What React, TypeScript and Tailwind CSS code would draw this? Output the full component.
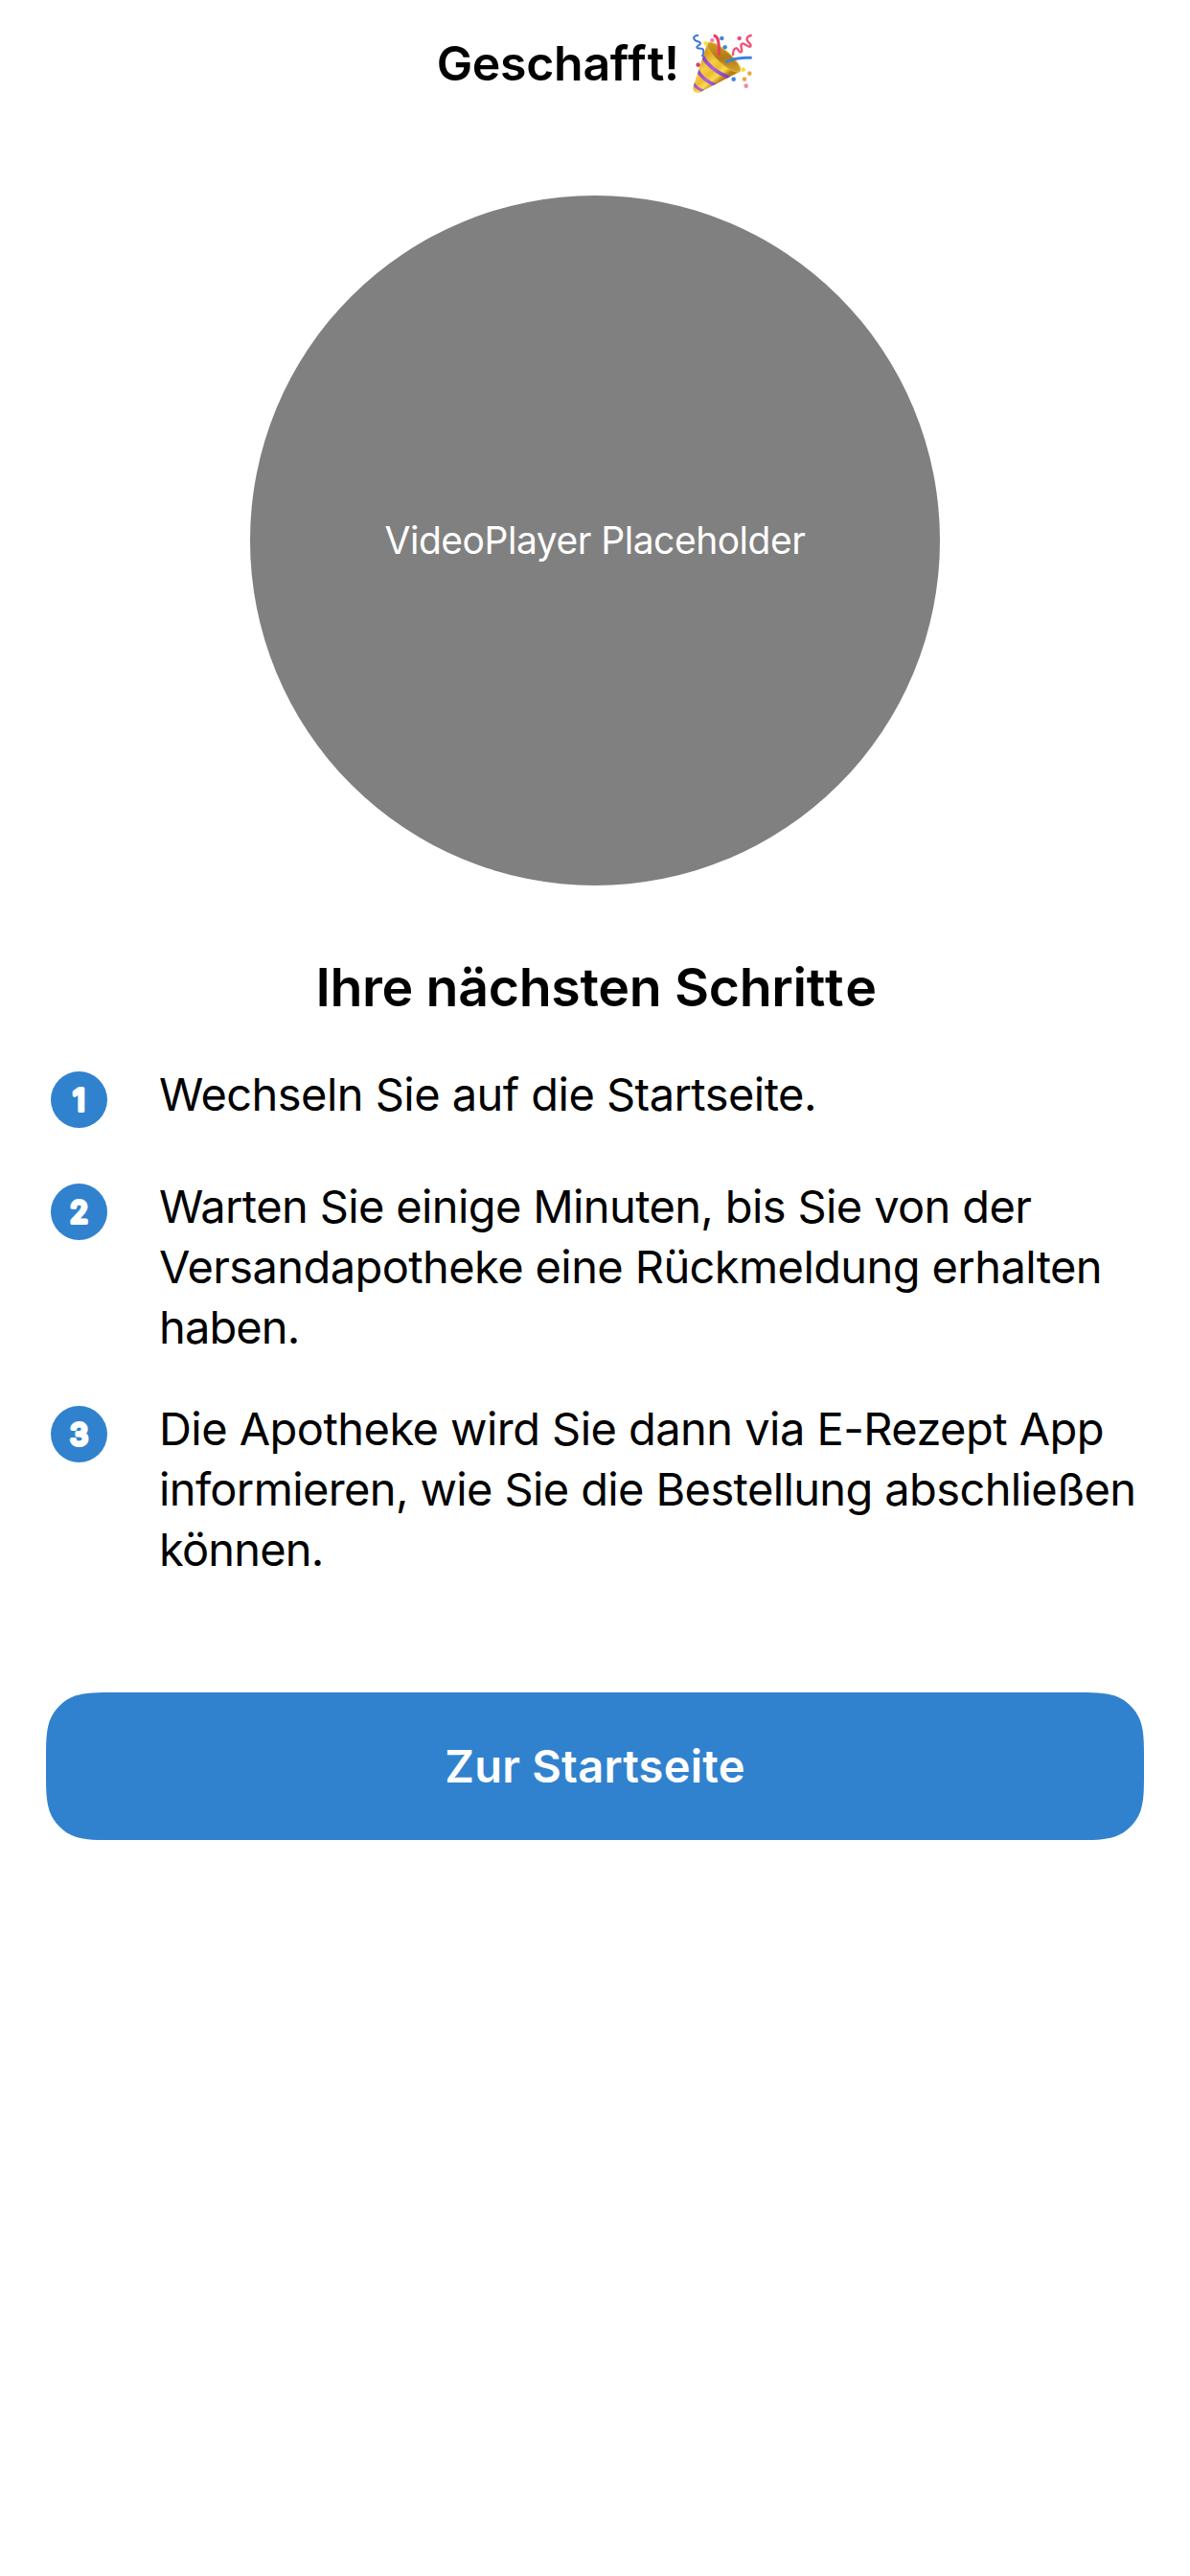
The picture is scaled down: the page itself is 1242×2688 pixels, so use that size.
import type { ReactNode } from 'react';

function PartyPopper() {
  return (
    <svg viewBox="33 27 192 192" className="ml-[13.5px] size-16 overflow-visible" role="img" aria-label="Party">
      <defs>
        <linearGradient id="cone" x1="58" y1="110" x2="118" y2="182" gradientUnits="userSpaceOnUse">
          <stop offset="0" stopColor="#d9a01c" />
          <stop offset="0.35" stopColor="#f5cf45" />
          <stop offset="0.6" stopColor="#eebb2c" />
          <stop offset="0.8" stopColor="#f8dc50" />
          <stop offset="1" stopColor="#b87d14" />
        </linearGradient>
        <linearGradient id="mouth" x1="90" y1="62" x2="180" y2="148" gradientUnits="userSpaceOnUse">
          <stop offset="0" stopColor="#d8a325" />
          <stop offset="0.5" stopColor="#b07a15" />
          <stop offset="1" stopColor="#dfae30" />
        </linearGradient>
        <linearGradient id="band" x1="50" y1="130" x2="130" y2="180" gradientUnits="userSpaceOnUse">
          <stop offset="0" stopColor="#8b43bd" />
          <stop offset="0.5" stopColor="#ac62de" />
          <stop offset="1" stopColor="#8c41bd" />
        </linearGradient>
        <clipPath id="coneClip">
          <path d="M82 60 L37 198 Q36 213 50 216 L56 215 L184 149 Z" />
        </clipPath>
      </defs>
      <path d="M82 60 L37 198 Q36 213 50 216 L56 215 L184 149 Z" fill="url(#cone)" />
      <g clipPath="url(#coneClip)" fill="none" stroke="url(#band)">
        <path d="M66 100 Q88 142 150 168" strokeWidth="11" />
        <path d="M50 144 Q68 178 110 192" strokeWidth="11" />
        <path d="M37 184 Q46 202 70 210" strokeWidth="9" />
      </g>
      <ellipse cx="133" cy="104" rx="67" ry="20" transform="rotate(41 133 104)" fill="url(#mouth)" stroke="#e6b93a" strokeWidth="3" />
      <path d="M101 36 Q113 38 116 54 Q120 74 118 98" fill="none" stroke="#ec3b62" strokeWidth="9" />
      <path d="M139 120 Q170 103 221 106" fill="none" stroke="#3d80e2" strokeWidth="9" />
      <path d="M54 36 C42 34 36 43 42 50 C48 57 58 53 60 60 C62 67 49 66 49 73 C50 80 66 73 69 81 Q72 88 65 102" fill="none" stroke="#3b74df" strokeWidth="6" />
      <path d="M162 99 Q162 77 171 76 C179 74 180 91 187 88 C196 85 181 67 190 62 C198 57 210 77 217 70 C223 63 201 55 206 45 Q209 36 221 36" fill="none" stroke="#f05078" strokeWidth="7" />
      <g stroke="#ffffff" strokeOpacity="0.35" strokeWidth="1.5">
        <circle cx="77" cy="61" r="7" fill="#f6e13b" />
        <circle cx="97" cy="51" r="7" fill="#f283ab" />
        <circle cx="127" cy="45" r="7" fill="#3984dc" />
        <circle cx="137" cy="73" r="7" fill="#3984dc" />
        <circle cx="182" cy="45" r="7" fill="#e95072" />
        <circle cx="53" cy="128" r="7" fill="#dc3c59" />
        <circle cx="194" cy="143" r="7" fill="#f6dc3b" />
        <circle cx="214" cy="155" r="7" fill="#f4a043" />
        <circle cx="198" cy="173" r="7" fill="#f4a043" />
        <circle cx="164" cy="173" r="7" fill="#3984dc" />
        <circle cx="203" cy="194" r="7" fill="#f283ab" />
      </g>
    </svg>
  );
}

function Step({ number, className, children }: { number: number; className?: string; children: ReactNode }) {
  return (
    <li className={`flex items-start gap-[54px] ${className ?? ''}`}>
      <svg viewBox="0 0 59 59" className="mt-2 size-[59px] shrink-0">
        <circle cx="29.5" cy="29.5" r="29.5" fill="#3182ce" />
        <text
          x="29.5"
          y="40.9"
          textAnchor="middle"
          fontFamily="Inter, sans-serif"
          fontWeight="400"
          fontSize="31"
          fill="#fff"
          stroke="#fff"
          strokeWidth="4"
          strokeLinejoin="round"
        >
          {number}
        </text>
      </svg>
      <p className="whitespace-nowrap text-[47px] leading-[63px]">{children}</p>
    </li>
  );
}

export default function App() {
  return (
    <div className="flex h-[2688px] w-[1242px] flex-col bg-white font-['Inter',sans-serif] text-black">
      <header className="flex h-[132px] items-center justify-center">
        <h1 className="text-[50px] font-semibold leading-none tracking-[-0.3px]">
          Gescha<span className="tracking-[1px]">ff</span>t!
        </h1>
        <PartyPopper />
      </header>

      <div className="mt-[72px] flex size-[720px] items-center justify-center self-center rounded-full bg-[#808080]">
        <span className="text-[39px] tracking-[-0.49px] text-white">VideoPlayer Placeholder</span>
      </div>

      <h2 className="mt-[70px] pl-[2px] text-center text-[55.5px] font-semibold leading-[72px] tracking-[-0.35px]">
        Ihre nächsten Schri<span className="tracking-[1.5px]">tt</span>e
      </h2>

      <ol className="mt-11 flex flex-col gap-[43px] pl-[53px]">
        <Step number={1} className="h-[74px]">
          <span className="tracking-[-0.54px]">Wechseln Sie auf die Startseite.</span>
        </Step>
        <Step number={2}>
          <span className="tracking-[-0.63px]">Warten Sie einige Minuten, bis Sie von der</span>
          <br />
          <span className="tracking-[-0.6px]">Versandapotheke eine Rückmeldung erhalten</span>
          <br />
          <span className="tracking-[-0.9px]">haben.</span>
        </Step>
        <Step number={3}>
          <span className="tracking-[-0.55px]">Die Apotheke wird Sie dann via E-Rezept App</span>
          <br />
          <span className="tracking-[-0.62px]">informieren, wie Sie die Bestellung abschließen</span>
          <br />
          <span className="tracking-[-0.8px]">können.</span>
        </Step>
      </ol>

      <button
        className="mx-12 mt-[118px] h-[154px] bg-[#3182ce] text-[47px] font-semibold tracking-[0.25px] text-white [clip-path:path('M73.38_0H1072.62C1093.75_0_1104.32_0_1115.69_3.6C1128.1_8.11_1137.89_17.9_1142.4_30.31C1146_41.68_1146_52.25_1146_73.38V80.62C1146_101.75_1146_112.32_1142.4_123.69C1137.89_136.1_1128.1_145.89_1115.69_150.4C1104.32_154_1093.75_154_1072.62_154H73.38C52.25_154_41.68_154_30.31_150.4C17.9_145.89_8.11_136.1_3.6_123.69C0_112.32_0_101.75_0_80.62V73.38C0_52.25_0_41.68_3.6_30.31C8.11_17.9_17.9_8.11_30.31_3.6C41.68_0_52.25_0_73.38_0Z')]"
      >
        Zur Startseite
      </button>
    </div>
  );
}
